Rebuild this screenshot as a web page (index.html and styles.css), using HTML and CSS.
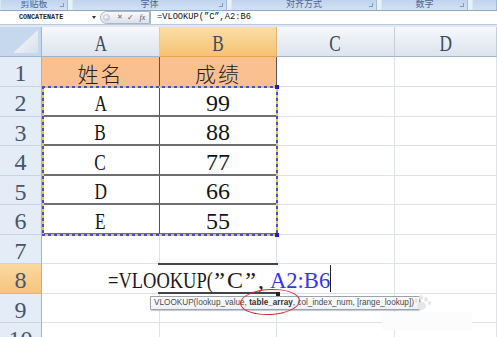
FILE: index.html
```html
<!DOCTYPE html>
<html>
<head>
<meta charset="utf-8">
<link rel="stylesheet" href="styles.css">
</head>
<body>
<div class="ribbon">
  <div class="grp g1"><span class="lbl">剪贴板</span><i class="launch"></i></div>
  <div class="grp g2"><span class="lbl">字体</span><i class="launch"></i></div>
  <div class="grp g3"><span class="lbl">对齐方式</span><i class="launch"></i></div>
  <div class="grp g4"><span class="lbl">数字</span><i class="launch"></i></div>
  <div class="grp g5"></div>
</div>
<div class="fbar">
  <div class="namebox"><span class="nm">CONCATENATE</span><i class="dd"></i></div>
  <div class="pill"><i class="bubble"></i><span class="x">✕</span><span class="ok">✓</span><span class="fx">fx</span></div>
  <div class="finput">=VLOOKUP(”C”,A2:B6</div>
</div>
<div class="band"></div>
<div class="sheet">
  <div class="grid">
    <div class="corner"><i class="tri"></i></div>
    <div class="ch"><span class="lt">A</span></div>
    <div class="ch sel"><span class="lt">B</span></div>
    <div class="ch"><span class="lt">C</span></div>
    <div class="ch"><span class="lt">D</span></div>

    <div class="rh">1</div>
    <div class="c hd tr"><span class="cn">姓名</span></div>
    <div class="c hd tr"><span class="cn">成绩</span></div>
    <div class="c"></div><div class="c"></div>

    <div class="rh">2</div>
    <div class="c tb tr"><span class="lt">A</span></div>
    <div class="c tb">99</div>
    <div class="c"></div><div class="c"></div>

    <div class="rh">3</div>
    <div class="c tb tr"><span class="lt">B</span></div>
    <div class="c tb">88</div>
    <div class="c"></div><div class="c"></div>

    <div class="rh">4</div>
    <div class="c tb tr"><span class="lt">C</span></div>
    <div class="c tb">77</div>
    <div class="c"></div><div class="c"></div>

    <div class="rh">5</div>
    <div class="c tb tr"><span class="lt">D</span></div>
    <div class="c tb">66</div>
    <div class="c"></div><div class="c"></div>

    <div class="rh">6</div>
    <div class="c tb tr"><span class="lt">E</span></div>
    <div class="c tb">55</div>
    <div class="c"></div><div class="c"></div>

    <div class="rh">7</div>
    <div class="c"></div><div class="c"></div><div class="c"></div><div class="c"></div>

    <div class="rh sel">8</div>
    <div class="c"></div><div class="c"></div><div class="c"></div><div class="c"></div>

    <div class="rh">9</div>
    <div class="c"></div><div class="c"></div><div class="c"></div><div class="c"></div>

    <div class="rh">10</div>
    <div class="c"></div><div class="c"></div><div class="c"></div><div class="c"></div>
  </div>

  <div class="ants"></div>
  <i class="hdl h1"></i>
  <i class="hdl h2"></i>

  <div class="editline"></div>
  <div class="edit"><span class="f1"><span>=VLOOKUP(</span></span><span class="f2"><span class="q">”</span>C<span class="q">”</span>,</span><span class="f3"><span>A2:B6</span></span><i class="caret"></i></div>

  <div class="tip">VLOOKUP(lookup_value, <b>table_array</b>, col_index_num, [range_lookup])</div>
  <div class="oval"></div>

  <div class="wm">
    <i class="paw p1"></i><i class="paw p2"></i><i class="paw p3"></i><i class="paw p4"></i><i class="paw p5"></i>
  </div>
  <div class="wmbox"></div>
</div>
</body>
</html>
```

FILE: styles.css
```css
* { box-sizing: border-box; margin: 0; padding: 0; }
body {
  width: 497px;
  height: 337px;
  overflow: hidden;
  background: #fff;
  font-family: "Liberation Serif", "Noto Sans CJK SC", serif;
}

/* ribbon strip */
.ribbon {
  display: flex;
  gap: 4px;
  height: 11px;
  background: #e8f0fa;
  border-bottom: 1px solid #8ea8ca;
}
.grp {
  position: relative;
  height: 10px;
  background: linear-gradient(#c0d4ee, #d2e1f4);
  border-right: 1px solid #a3bad8;
  border-left: 1px solid #dce7f5;
  display: flex;
  justify-content: center;
  align-items: flex-end;
  overflow: hidden;
}
.g1 { width: 68px; }
.g2 { width: 155px; }
.g3 { width: 146px; }
.g4 { width: 87px; }
.g5 { flex: 1; }
.lbl {
  font: 9px/9px "Noto Sans CJK SC", sans-serif;
  color: #4a6895;
  margin-bottom: 2px;
}
.launch {
  position: absolute;
  right: 3px;
  bottom: 3px;
  width: 4px;
  height: 4px;
  border-right: 1px solid #8199bd;
  border-bottom: 1px solid #8199bd;
}

/* formula bar */
.fbar {
  display: flex;
  height: 14px;
  background: #fff;
  border-bottom: 1px solid #b9c8db;
}
.namebox {
  width: 100px;
  display: flex;
  align-items: center;
  padding-left: 19px;
}
.nm {
  font: bold 6.7px/1 "Liberation Mono", monospace;
  color: #222;
}
.dd {
  margin-left: auto;
  margin-right: 4px;
  border-left: 2.5px solid transparent;
  border-right: 2.5px solid transparent;
  border-top: 3px solid #333;
}
.pill {
  width: 50px;
  display: flex;
  align-items: center;
  background: linear-gradient(#f8f9fb, #dce1e8);
  border: 1px solid #aab6c6;
  border-radius: 7px 0 0 7px;
}
.bubble {
  width: 7px;
  height: 7px;
  border-radius: 50%;
  background: radial-gradient(circle at 35% 35%, #ffffff, #b3bcc8);
  border: 1px solid #c2c9d3;
  margin-left: 2px;
}
.x {
  font: bold 7px/1 "DejaVu Sans", sans-serif;
  color: #666;
  margin-left: 7px;
}
.ok {
  font: bold 8px/1 "DejaVu Sans", sans-serif;
  color: #5a5a5a;
  margin-left: 4px;
}
.fx {
  font: italic 8px/1 "Liberation Serif", serif;
  color: #555;
  margin-left: 6px;
}
.finput {
  flex: 1;
  border-left: 1px solid #aab6c6;
  padding-left: 6px;
  font: 8.7px/13px "Liberation Mono", monospace;
  color: #111;
  white-space: nowrap;
}
.band {
  height: 2px;
  background: #e2e8f0;
}

/* sheet */
.sheet { position: relative; }
.grid {
  display: grid;
  grid-template-columns: 42px 118px 117px 118px 102px;
  grid-template-rows: 30px 30px 30px 29px 30px 29px 30px 29px 30px 29px 30px;
}
.corner {
  background: #c6d8ee;
  border-right: 1px solid #9eb3cc;
  border-bottom: 1px solid #9eb3cc;
  display: flex;
  align-items: flex-end;
  justify-content: flex-end;
  padding: 0 3px 3px 0;
}
.tri {
  width: 25px;
  height: 23px;
  clip-path: polygon(100% 0, 100% 100%, 0 100%);
  background: linear-gradient(135deg, #fafbfd, #d9e0ea);
}
.ch {
  background: linear-gradient(#f6f8fb, #dde4ee);
  border-right: 1px solid #c3cedc;
  border-bottom: 1px solid #9eb3cc;
  display: flex;
  align-items: center;
  justify-content: center;
  padding-top: 4px;
  font-size: 24px;
  color: #3c4a5e;
}
.ch.sel {
  background: linear-gradient(#fbdea8, #f5c272);
  border-bottom-color: #eaa646;
  border-right-color: #e0b57a;
}
.rh {
  background: #e4ecf7;
  border-right: 1px solid #9eb3cc;
  border-bottom: 1px solid #c7d3e3;
  display: flex;
  align-items: center;
  justify-content: center;
  padding-top: 4px;
  font-size: 24px;
  color: #46556b;
}
.rh.sel {
  background: linear-gradient(#fbd9a2, #f6c47c);
  border-bottom-color: #e8b36c;
}
.c {
  border-right: 1px solid #dde2ea;
  border-bottom: 1px solid #dde2ea;
  display: flex;
  align-items: center;
  justify-content: center;
  padding-top: 4px;
  font-size: 24px;
  color: #151515;
}
.lt {
  display: inline-block;
  transform: scaleX(0.72);
}
.hd { background: #fac090; }
.cn {
  font: 300 21px/1 "Noto Sans CJK SC", sans-serif;
  letter-spacing: 2px;
  color: #222;
}
.tb { border-bottom: 2px solid #6e6e6e; }
.tr { border-right: 1px solid #555; }

/* marching ants around A2:B6 */
.ants {
  position: absolute;
  left: 42px;
  top: 59px;
  width: 236px;
  height: 150px;
  background:
    repeating-linear-gradient(90deg, #4a4ad6 0 3px, #d8cc4a 3px 6px) top left / 100% 2px no-repeat,
    repeating-linear-gradient(90deg, #4a4ad6 0 3px, #d8cc4a 3px 6px) bottom left / 100% 2px no-repeat,
    repeating-linear-gradient(180deg, #4a4ad6 0 3px, #d8cc4a 3px 6px) top left / 2px 100% no-repeat,
    repeating-linear-gradient(180deg, #4a4ad6 0 3px, #d8cc4a 3px 6px) top right / 2px 100% no-repeat;
}
.hdl {
  position: absolute;
  width: 4px;
  height: 4px;
  background: #1c1ce0;
}
.h1 { left: 275px; top: 58px; }
.h2 { left: 275px; top: 206px; }

/* edited cell B8 */
.editline {
  position: absolute;
  left: 158px;
  top: 236px;
  width: 120px;
  height: 31px;
  border-top: 2px solid #444;
  border-bottom: 2px solid #444;
}
.editline::after {
  content: "";
  position: absolute;
  right: -2px;
  bottom: -4px;
  width: 4px;
  height: 4px;
  background: #222;
}
.edit {
  position: absolute;
  left: 106px;
  top: 238px;
  width: 228px;
  height: 27px;
  background: #fff;
  padding: 2px 0 0 2px;
  display: flex;
  align-items: flex-start;
  font-size: 24px;
  line-height: 26px;
  color: #1a1a1a;
  white-space: nowrap;
}
.f1 {
  display: inline-block;
  width: 104px;
}
.f1 span {
  display: inline-block;
  transform: scaleX(0.77);
  transform-origin: left center;
}
.f2 {
  display: inline-block;
  width: 58px;
}
.q {
  display: inline-block;
  width: 15px;
  text-align: center;
}
.f3 {
  display: inline-block;
  width: 60px;
  color: #3434ee;
}
.f3 span {
  display: inline-block;
  transform: scaleX(0.94);
  transform-origin: left center;
}
.caret {
  width: 1px;
  height: 27px;
  margin-top: -2px;
  background: #222;
}

/* tooltip */
.tip {
  position: absolute;
  left: 150px;
  top: 269px;
  width: 270px;
  height: 14px;
  padding-left: 3px;
  background: linear-gradient(#ffffff, #eef1f5);
  border: 1px solid #9aa3b3;
  border-radius: 0 0 2px 0;
  box-shadow: 1px 1px 1px rgba(120, 130, 150, 0.45);
  font: 8.2px/12px "Liberation Sans", sans-serif;
  color: #4a4a4a;
  white-space: nowrap;
}
.tip b { color: #333; }
.oval {
  position: absolute;
  left: 240px;
  top: 262px;
  width: 60px;
  height: 26px;
  border: 1.5px solid #e2262b;
  border-radius: 50%;
  transform: rotate(-3deg);
}

/* watermark */
.wm {
  position: absolute;
  left: 410px;
  top: 268px;
  width: 40px;
  height: 20px;
}
.paw {
  position: absolute;
  border-radius: 50%;
  background: #e6e6e6;
}
.p1 { left: 4px; top: 3px; width: 4px; height: 5px; }
.p2 { left: 9px; top: 0; width: 4px; height: 5px; }
.p3 { left: 14px; top: 2px; width: 4px; height: 5px; }
.p4 { left: 18px; top: 6px; width: 3px; height: 4px; }
.p5 { left: 7px; top: 7px; width: 9px; height: 8px; }
.wmbox {
  position: absolute;
  left: 382px;
  top: 285px;
  width: 90px;
  height: 18px;
  background: #fcfcfc;
}
```
